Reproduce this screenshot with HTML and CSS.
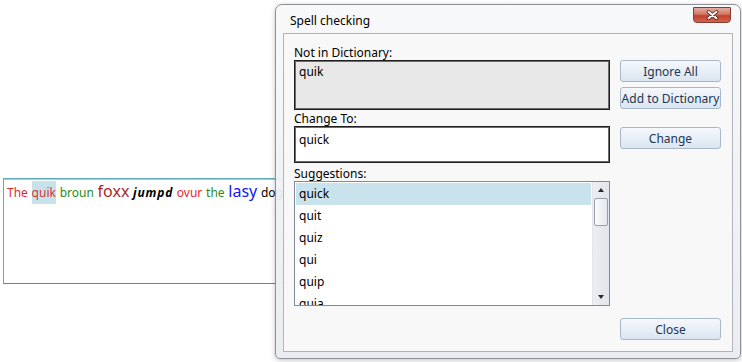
FILE: index.html
```html
<!DOCTYPE html>
<html lang="en">
<head>
    <meta charset="UTF-8">
    <title>Spell checking</title>
    <link rel="stylesheet" href="styles.css">
</head>
<body>
    <div class="editor">
        <p class="editor-line">
            <span class="w-red">The</span> <span class="w-red misspelled">quik</span> <span class="w-green">broun</span> <span class="w-brown big">foxx</span> <span class="w-bold">jumpd</span> <span class="w-red">ovur</span> <span class="w-green">the</span> <span class="w-blue big">lasy</span> <span>dog.</span>
        </p>
    </div>

    <div class="dialog">
        <div class="titlebar">
            <span class="title">Spell checking</span>
            <button class="close-x" aria-label="Close">
                <svg width="13" height="10" viewBox="0 0 13 10">
                    <path d="M2.5 1.8 L10.5 8.2 M10.5 1.8 L2.5 8.2" stroke="#5a2a22" stroke-width="3.6" stroke-linecap="round"/>
                    <path d="M2.5 1.8 L10.5 8.2 M10.5 1.8 L2.5 8.2" stroke="#fff" stroke-width="1.9" stroke-linecap="round"/>
                </svg>
            </button>
        </div>

        <div class="client">
            <div class="main">
                <div class="fields">
                    <div class="label">Not in Dictionary:</div>
                    <div class="word-box">quik</div>

                    <div class="label">Change To:</div>
                    <div class="change-box">quick</div>

                    <div class="label label-list">Suggestions:</div>
                    <div class="list">
                        <div class="items">
                            <div class="item selected">quick</div>
                            <div class="item">quit</div>
                            <div class="item">quiz</div>
                            <div class="item">qui</div>
                            <div class="item">quip</div>
                            <div class="item">quia</div>
                        </div>
                        <div class="scrollbar">
                            <span class="arrow arrow-up"></span>
                            <span class="thumb"></span>
                            <span class="arrow arrow-down"></span>
                        </div>
                    </div>
                </div>

                <div class="actions">
                    <button class="btn">Ignore All</button>
                    <button class="btn">Add to Dictionary</button>
                    <button class="btn btn-change">Change</button>
                </div>
            </div>

            <div class="footer">
                <button class="btn">Close</button>
            </div>
        </div>
    </div>
</body>
</html>
```

FILE: styles.css
```css
* {
    box-sizing: border-box;
}

body {
    margin: 0;
    padding: 178px 0 0 3px;
    width: 742px;
    height: 362px;
    position: relative;
    overflow: hidden;
    background-color: #fff;
    font-family: "Noto Sans", "DejaVu Sans", sans-serif;
    font-size: 12px;
    color: #000;
}

/* rich text editor behind the dialog */
.editor {
    width: 420px;
    height: 106px;
    border: 1px solid #62a9bc;
    border-bottom-color: #5c8797;
    box-shadow: inset 0 1px 0 #9fd0dd;
    padding: 1px 3px;
}

.editor-line {
    margin: 0;
    line-height: 22px;
    white-space: nowrap;
    word-spacing: 0.6px;
}

.w-red {
    color: #e8262e;
}

.w-green {
    color: #2a8a1e;
}

.w-brown {
    color: #a8282c;
}

.w-blue {
    color: #1414ff;
}

.w-bold {
    font-weight: bold;
    font-style: italic;
    letter-spacing: 0.8px;
}

.big {
    font-size: 16px;
}

.misspelled {
    color: #d8343c;
    background-color: #c8e2eb;
    padding: 3px 0;
}

/* dialog window */
.dialog {
    position: absolute;
    left: 275px;
    top: 4px;
    width: 466px;
    height: 355px;
    padding: 0 7px 6px;
    border: 1px solid #8e9297;
    border-radius: 7px 7px 5px 5px;
    background: linear-gradient(rgba(247, 248, 250, 0.94), rgba(233, 236, 240, 0.94));
    box-shadow: 0 1px 5px rgba(0, 0, 0, 0.25);
    display: flex;
    flex-direction: column;
}

.titlebar {
    height: 28px;
    display: flex;
    justify-content: space-between;
    align-items: flex-start;
}

.title {
    padding: 8px 0 0 7px;
    line-height: 16px;
}

.close-x {
    margin: 2px 2px 0 0;
    width: 38px;
    height: 16px;
    padding: 0;
    border: 1px solid #8a3a30;
    border-radius: 0 0 4px 4px;
    background: linear-gradient(#e6ada2, #d07664 45%, #c3402e 55%, #cf6450);
    display: flex;
    align-items: center;
    justify-content: center;
}

.client {
    flex: 1;
    background-color: #f8f8f8;
    border: 1px solid #b0b4b8;
    padding: 10px 11px 11px 10px;
    display: flex;
    flex-direction: column;
}

.main {
    display: flex;
    gap: 10px;
}

.fields {
    width: 316px;
    display: flex;
    flex-direction: column;
}

.label {
    height: 16px;
    line-height: 18px;
}

.label-list {
    height: 18px;
    line-height: 21px;
}

.word-box,
.change-box {
    border: 1px solid #1e1e1e;
    box-shadow: inset 0 0 0 1px #6c6c6c;
    padding: 3px 4px;
    line-height: 16px;
}

.word-box {
    height: 50px;
    background-color: #e8e8e8;
}

.change-box {
    height: 37px;
    padding-top: 5px;
    background-color: #fff;
}

.list {
    height: 125px;
    border: 1px solid #7f8a96;
    background-color: #fff;
    display: flex;
    overflow: hidden;
}

.items {
    flex: 1;
    padding: 1px 1px 0;
}

.item {
    height: 22px;
    line-height: 22px;
    padding-left: 3px;
}

.selected {
    background-color: #c9e3ec;
}

.scrollbar {
    width: 17px;
    border-left: 1px solid #e3e5e8;
    background: linear-gradient(to right, #eceef1, #e2e5e9);
    display: flex;
    flex-direction: column;
    align-items: center;
}

.arrow {
    width: 0;
    height: 0;
    border-left: 3.5px solid transparent;
    border-right: 3.5px solid transparent;
}

.arrow-up {
    margin-top: 6px;
    border-bottom: 4px solid #2a2a2a;
}

.arrow-down {
    margin-top: auto;
    margin-bottom: 6px;
    border-top: 4px solid #2a2a2a;
}

.thumb {
    margin-top: 6px;
    width: 14px;
    height: 28px;
    border: 1px solid #979fa8;
    border-radius: 2px;
    background: linear-gradient(to right, #fbfbfc, #e4e8ed);
}

.actions {
    width: 101px;
    padding-top: 16px;
    display: flex;
    flex-direction: column;
    gap: 5px;
}

.btn {
    width: 101px;
    height: 22px;
    padding: 0;
    border: 1px solid #a9b8c9;
    border-radius: 3px;
    background: linear-gradient(#f5f8fc, #e8eff7 50%, #dae5f1);
    font-family: "Noto Sans", "DejaVu Sans", sans-serif;
    font-size: 12px;
    color: #1e3553;
    white-space: nowrap;
}

.btn-change {
    margin-top: 13px;
}

.footer {
    margin-top: auto;
    display: flex;
    justify-content: flex-end;
}
```
